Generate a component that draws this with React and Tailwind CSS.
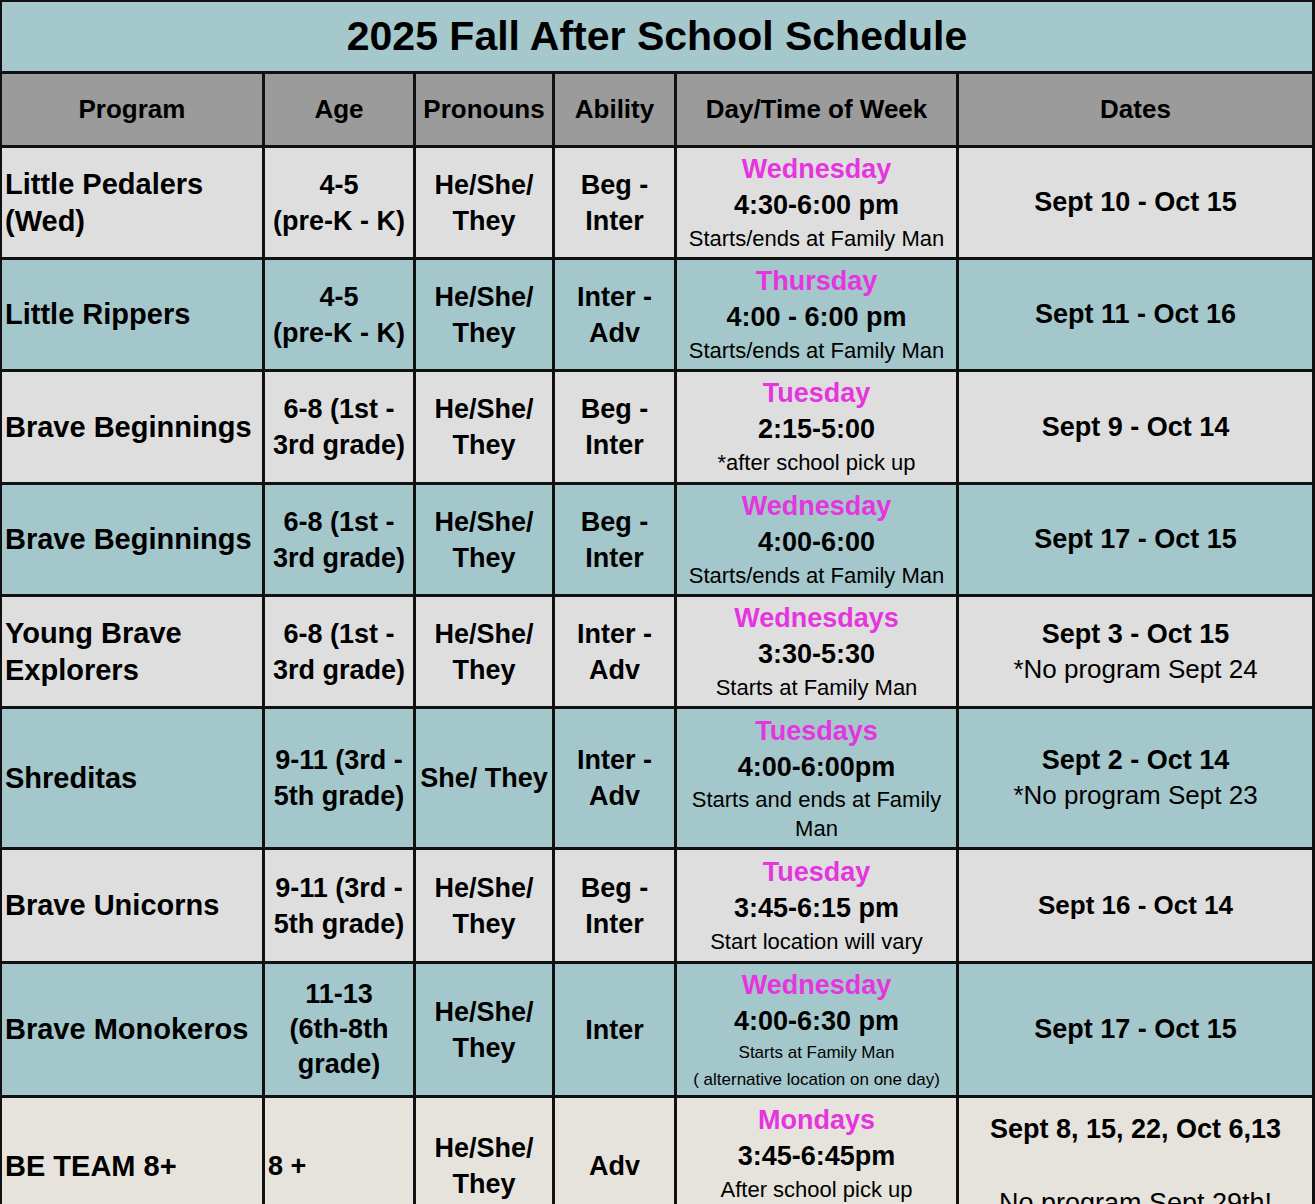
import React from "react";

const rows = [
  {
    bg: "bg-[#dedede]",
    program: ["Little Pedalers", "(Wed)"],
    age: ["4-5", "(pre-K - K)"],
    pron: ["He/She/", "They"],
    ability: ["Beg -", "Inter"],
    day: "Wednesday",
    time: "4:30-6:00 pm",
    notes: ["Starts/ends at Family Man"],
    dates: [{ t: "Sept 10 - Oct 15", b: true }],
  },
  {
    bg: "bg-[#a4c7cb]",
    program: ["Little Rippers"],
    age: ["4-5", "(pre-K - K)"],
    pron: ["He/She/", "They"],
    ability: ["Inter -", "Adv"],
    day: "Thursday",
    time: "4:00 - 6:00 pm",
    notes: ["Starts/ends at Family Man"],
    dates: [{ t: "Sept 11 - Oct 16", b: true }],
  },
  {
    bg: "bg-[#dedede]",
    program: ["Brave Beginnings"],
    age: ["6-8 (1st -", "3rd grade)"],
    pron: ["He/She/", "They"],
    ability: ["Beg -", "Inter"],
    day: "Tuesday",
    time: "2:15-5:00",
    notes: ["*after school pick up"],
    dates: [{ t: "Sept 9 - Oct 14", b: true }],
  },
  {
    bg: "bg-[#a4c7cb]",
    program: ["Brave Beginnings"],
    age: ["6-8 (1st -", "3rd grade)"],
    pron: ["He/She/", "They"],
    ability: ["Beg -", "Inter"],
    day: "Wednesday",
    time: "4:00-6:00",
    notes: ["Starts/ends at Family Man"],
    dates: [{ t: "Sept 17 - Oct 15", b: true }],
  },
  {
    bg: "bg-[#dedede]",
    program: ["Young Brave", "Explorers"],
    age: ["6-8 (1st -", "3rd grade)"],
    pron: ["He/She/", "They"],
    ability: ["Inter -", "Adv"],
    day: "Wednesdays",
    time: "3:30-5:30",
    notes: ["Starts at Family Man"],
    dates: [
      { t: "Sept 3 - Oct 15", b: true },
      { t: "*No program Sept 24", b: false },
    ],
  },
  {
    bg: "bg-[#a4c7cb]",
    program: ["Shreditas"],
    age: ["9-11 (3rd -", "5th grade)"],
    pron: ["She/ They"],
    ability: ["Inter -", "Adv"],
    day: "Tuesdays",
    time: "4:00-6:00pm",
    notes: ["Starts and ends at Family", "Man"],
    dates: [
      { t: "Sept 2 - Oct 14", b: true },
      { t: "*No program Sept 23", b: false },
    ],
  },
  {
    bg: "bg-[#dedede]",
    program: ["Brave Unicorns"],
    age: ["9-11 (3rd -", "5th grade)"],
    pron: ["He/She/", "They"],
    ability: ["Beg -", "Inter"],
    day: "Tuesday",
    time: "3:45-6:15 pm",
    notes: ["Start location will vary"],
    dates: [{ t: "Sept 16 - Oct 14", b: true, small: true }],
  },
  {
    bg: "bg-[#a4c7cb]",
    program: ["Brave Monokeros"],
    age: ["11-13", "(6th-8th", "grade)"],
    pron: ["He/She/", "They"],
    ability: ["Inter"],
    day: "Wednesday",
    time: "4:00-6:30 pm",
    notes: ["Starts at Family Man", "( alternative location on one day)"],
    small: true,
    dates: [{ t: "Sept 17 - Oct 15", b: true }],
  },
];

function Lines({ lines, lh = "leading-[36px]" }) {
  return lines.map((l, i) => (
    <div key={i} className={`whitespace-nowrap ${lh}`}>
      {l}
    </div>
  ));
}

function Row({ r }) {
  const cell = `${r.bg} flex flex-col justify-center items-center text-center`;
  return (
    <>
      <div className={`${r.bg} flex flex-col justify-center pl-[3px] text-[29px] font-bold leading-[37px]`}>
        <Lines lines={r.program} lh="leading-[37px]" />
      </div>
      <div className={`${cell} text-[27px] font-bold`}>
        <Lines lines={r.age} lh={r.age.length > 2 ? "leading-[35px]" : "leading-[36px]"} />
      </div>
      <div className={`${cell} text-[27px] font-bold`}>
        <Lines lines={r.pron} />
      </div>
      <div className={`${cell} text-[27px] font-bold`}>
        <Lines lines={r.ability} />
      </div>
      <div className={`${cell}`}>
        <div className="text-[27px] font-bold text-[#e535df] leading-[36px] whitespace-nowrap">{r.day}</div>
        <div className="text-[27px] font-bold leading-[36px] whitespace-nowrap">{r.time}</div>
        {r.small
          ? r.notes.map((n, i) => (
              <div key={i} className="text-[17px] leading-[27px] whitespace-nowrap">
                {n}
              </div>
            ))
          : r.notes.map((n, i) => (
              <div
                key={i}
                className={`text-[22px] whitespace-nowrap ${r.notes.length > 1 ? "leading-[29px]" : "leading-[32px]"}`}
              >
                {n}
              </div>
            ))}
      </div>
      <div className={`${cell}`}>
        {r.dates.map((d, i) => (
          <div
            key={i}
            className={`whitespace-nowrap leading-[35px] ${d.b ? "font-bold" : "font-normal"} ${
              d.small ? "text-[26px]" : d.b ? "text-[27px]" : "text-[26px]"
            }`}
          >
            {d.t}
          </div>
        ))}
      </div>
    </>
  );
}

export default function App() {
  const heads = ["Program", "Age", "Pronouns", "Ability", "Day/Time of Week", "Dates"];
  return (
    <div className="w-[1315px] h-[1204px] overflow-hidden bg-white font-['Liberation_Sans',Arial,sans-serif] text-black">
      <div className="grid grid-cols-[260px_148px_136px_119px_279px_353px] grid-rows-[69px_71px_109px_109px_110px_109px_109px_138px_111px_131px_136px] gap-[3px] bg-[#111] pl-[2px] pr-[3px] pt-[2px]">
        <div className="col-span-6 bg-[#a4c8cc] flex items-center justify-center text-[41px] font-bold leading-none">
          2025 Fall After School Schedule
        </div>
        {heads.map((h) => (
          <div
            key={h}
            className="bg-[#9b9b9b] flex items-center justify-center text-[26px] font-bold whitespace-nowrap"
          >
            {h}
          </div>
        ))}
        {rows.map((r, i) => (
          <Row key={i} r={r} />
        ))}
        <div className="bg-[#e6e3dd] flex flex-col justify-center pl-[3px] text-[29px] font-bold">
          <div className="whitespace-nowrap leading-[37px]">BE TEAM 8+</div>
        </div>
        <div className="bg-[#e6e3dd] flex flex-col justify-center pl-[3px] text-[27px] font-bold">
          <div className="whitespace-nowrap leading-[36px]">8 +</div>
        </div>
        <div className="bg-[#e6e3dd] flex flex-col justify-center items-center text-center text-[27px] font-bold">
          <div className="whitespace-nowrap leading-[36px]">He/She/</div>
          <div className="whitespace-nowrap leading-[36px]">They</div>
        </div>
        <div className="bg-[#e6e3dd] flex flex-col justify-center items-center text-center text-[27px] font-bold">
          <div className="whitespace-nowrap leading-[36px]">Adv</div>
        </div>
        <div className="bg-[#e6e3dd] flex flex-col justify-start items-center text-center pt-[4px]">
          <div className="text-[27px] font-bold text-[#e535df] leading-[36px] whitespace-nowrap">Mondays</div>
          <div className="text-[27px] font-bold leading-[36px] whitespace-nowrap">3:45-6:45pm</div>
          <div className="text-[22px] leading-[32px] whitespace-nowrap">After school pick up</div>
        </div>
        <div className="bg-[#e6e3dd] flex flex-col justify-center items-center text-center text-[27px]">
          <div className="whitespace-nowrap leading-[37px] font-bold">Sept 8, 15, 22, Oct 6,13</div>
          <div className="leading-[37px]">&nbsp;</div>
          <div className="whitespace-nowrap leading-[37px]">No program Sept 29th!</div>
        </div>
      </div>
    </div>
  );
}
